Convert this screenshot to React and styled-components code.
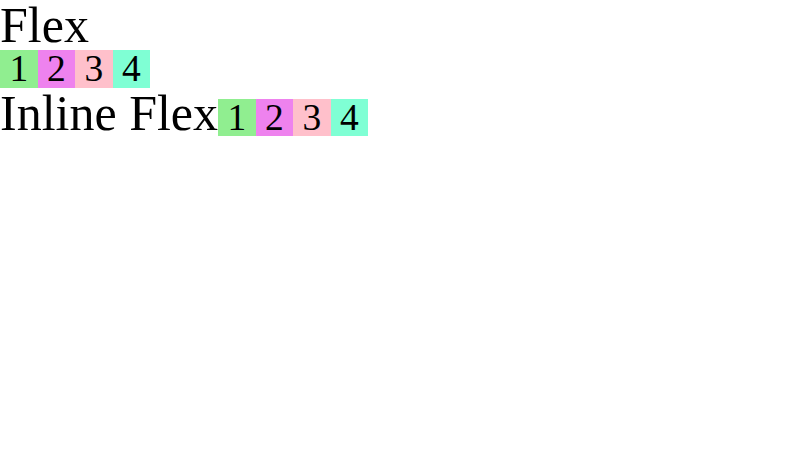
import React from 'react'
import styled, { createGlobalStyle } from 'styled-components'

const GlobalStyle = createGlobalStyle`
  body {
    margin: 0;
    font-family: "Liberation Serif", "Times New Roman", serif;
    font-size: 50px;
    line-height: 1;
    color: #000;
    background: #fff;
  }
`

const Title = styled.div`
  font-size: 50px;
  line-height: 1;
`

const Row = styled.div`
  display: ${props => (props.$inline ? 'inline-flex' : 'flex')};
  font-size: 0.75em;
  line-height: 1;
`

const Item = styled.div`
  width: 1em;
  display: flex;
  justify-content: center;
  background: ${props => props.color};
`

const colors = ['lightgreen', 'violet', 'pink', 'aquamarine']

const Items = ({ inline }) => (
  <Row $inline={inline}>
    {colors.map((c, i) => (
      <Item key={c} color={c}>{i + 1}</Item>
    ))}
  </Row>
)

export default function App () {
  return (
    <>
      <GlobalStyle />
      <Title>Flex</Title>
      <Items />
      <Title>Inline Flex<Items inline /></Title>
    </>
  )
}
